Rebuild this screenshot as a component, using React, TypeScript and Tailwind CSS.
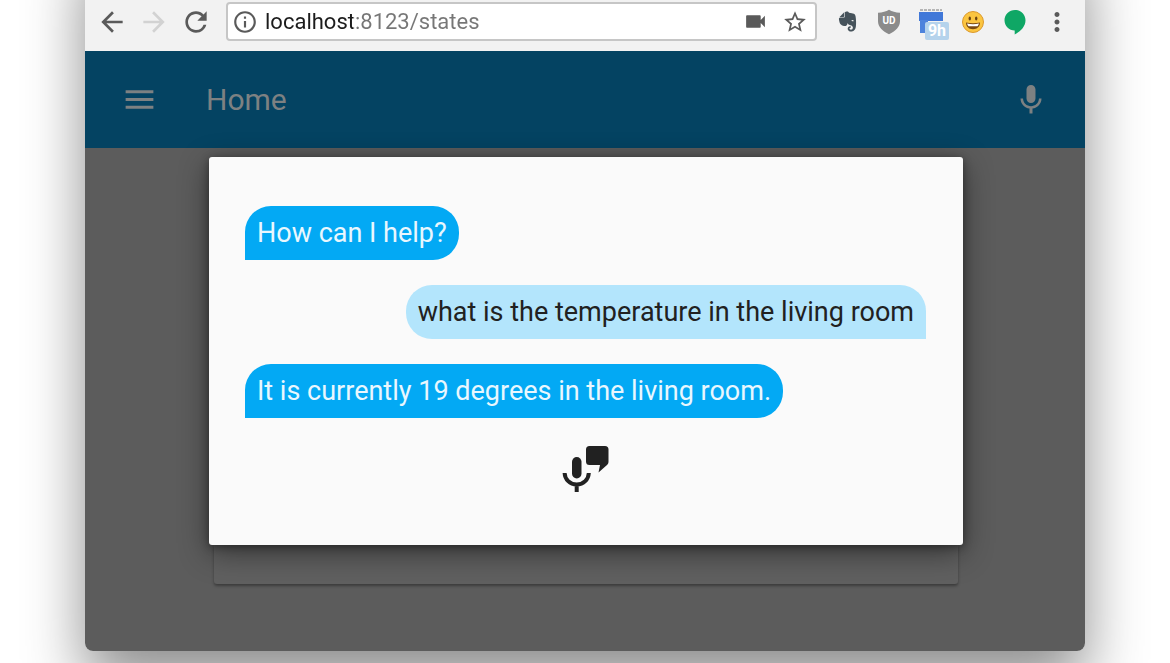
import React from 'react';
import { FaEvernote } from 'react-icons/fa';
import { MdArrowBack, MdArrowForward, MdInfoOutline, MdMenu, MdMic, MdMoreVert, MdRefresh, MdStarBorder, MdVideocam } from 'react-icons/md';

type Message = {
  id: number;
  from: 'assistant' | 'user';
  text: string;
};

const messages: Message[] = [
  { id: 1, from: 'assistant', text: 'How can I help?' },
  { id: 2, from: 'user', text: 'what is the temperature in the living room' },
  { id: 3, from: 'assistant', text: 'It is currently 19 degrees in the living room.' },
];

const iconButton = 'flex size-8 shrink-0 items-center justify-center';

const ShieldIcon = () => (
  <svg viewBox="0 0 24 26" className="h-[26px] w-6">
    <path d="M12 .8c3 1.800 6.500 2.800 11 3v8.400c0 5.800-4.600 9.800-11 13-6.400-3.200-11-7.200-11-13V3.800c4.500-.2 8-1.200 11-3z" fill="#8b8b8b" />
    <text x="12" y="15" textAnchor="middle" fontSize="10" fontWeight="700" fill="#fff">UD</text>
  </svg>
);

const CalendarIcon = () => (
  <svg viewBox="0 0 32 32" className="size-8">
    <path d="M5 4h22" stroke="#b5b5b5" strokeWidth="2" strokeDasharray="3 1" />
    <path d="M4 6h24v9H4z" fill="#4178d8" />
    <path d="M5 14h8v13H5z" fill="#4d83dc" />
  </svg>
);

const SmileyIcon = () => (
  <svg viewBox="0 0 24 24" className="size-6">
    <circle cx="12" cy="12" r="10.500" fill="#fbc540" stroke="#dc9a2e" />
    <ellipse cx="8.800" cy="8.500" rx="1.200" ry="1.900" fill="#6b4513" />
    <ellipse cx="15.200" cy="8.500" rx="1.200" ry="1.900" fill="#6b4513" />
    <path d="M5 12.500c4.500 1 9.500 1 14 0 0 4-2.800 6.700-7 6.700s-7-2.700-7-6.700z" fill="#7a4a12" />
    <path d="M6 13.600c4 .8 8 .8 12 0-.3 1-.8 1.900-1.500 2.600h-9c-.7-.7-1.200-1.600-1.500-2.600z" fill="#fff" />
  </svg>
);

const HangoutsIcon = () => (
  <svg viewBox="0 0 24 26" className="h-[26px] w-6" fill="#0fa765">
    <path d="M12 1C6.200 1 1.500 5.600 1.500 11.300c0 5.600 4.500 10.200 10.200 10.300v3.900c5.600-2.700 10.800-7.900 10.800-14.200C22.500 5.600 17.800 1 12 1z" />
  </svg>
);

const VoiceReplyIcon = () => (
  <svg viewBox="0 0 48 48" className="size-12" fill="#212121">
    <path d="M27.500 1h15.500A3.500 3.500 0 0 1 46.500 4.500v12c0 1.500-.5 2.500-1.500 3.500l-8.500 7.500 1.500-7.500H27.500a3.500 3.500 0 0 1-3.500-3.500v-12A3.500 3.500 0 0 1 27.500 1z" />
    <rect x="10" y="12" width="9.500" height="21.500" rx="4.750" />
    <path d="M2.600 28c.3 6.500 5.200 11.500 12.100 11.500S26.500 34.500 26.800 28M14.700 39v8" fill="none" stroke="#212121" strokeWidth="4" />
  </svg>
);

const BrowserToolbar: React.FC = () => (
  <div className="flex items-center gap-[14px] bg-[#f2f2f2] pt-[66px] pr-3 pb-[10px] pl-[11px] text-[#5a5a5a]">
    <nav className="flex gap-[10px]">
      <button aria-label="Back" className={iconButton}>
        <MdArrowBack size={32} />
      </button>
      <button aria-label="Forward" disabled className={`${iconButton} text-[#d2d2d2]`}>
        <MdArrowForward size={32} />
      </button>
      <button aria-label="Reload" className={iconButton}>
        <MdRefresh size={32} />
      </button>
    </nav>

    <div className="flex h-[39px] min-w-0 flex-1 items-center rounded-[4px] border-2 border-[#c6c6c6] bg-white px-1">
      <MdInfoOutline size={26} className="shrink-0" />
      <input
        type="text"
        aria-label="Address"
        defaultValue="localhost:8123/states"
        spellCheck={false}
        className="ml-[7px] min-w-0 flex-1 bg-[linear-gradient(to_right,#1c1c1c_88px,#767676_88px)] bg-clip-text text-[22px] leading-7 text-transparent outline-none"
      />
      <button aria-label="Camera" className={iconButton}>
        <MdVideocam size={25} />
      </button>
      <button aria-label="Bookmark this page" className="ml-2 flex size-8 shrink-0 items-center justify-center">
        <MdStarBorder size={26} />
      </button>
    </div>

    <div className="flex gap-[10px]">
      <button aria-label="Notes" className={iconButton}>
        <FaEvernote size={23} color="#46535b" />
      </button>
      <button aria-label="Blocker" className={iconButton}>
        <ShieldIcon />
      </button>
      <button aria-label="Calendar" className="relative size-8 shrink-0">
        <CalendarIcon />
        <span className="absolute -right-0.5 -bottom-0.5 flex h-[18px] w-6 items-center justify-center rounded-xs bg-[#b5d3ec] text-base leading-4 font-bold text-white">
          9h
        </span>
      </button>
      <button aria-label="Emoji" className={iconButton}>
        <SmileyIcon />
      </button>
      <button aria-label="Hangouts" className={iconButton}>
        <HangoutsIcon />
      </button>
      <button aria-label="More" className={iconButton}>
        <MdMoreVert size={30} />
      </button>
    </div>
  </div>
);

const AppHeader: React.FC = () => (
  <header className="flex h-[97px] items-center bg-[#044362] px-9 text-[#7d8182]">
    <button aria-label="Menu">
      <MdMenu size={37} />
    </button>
    <h1 className="ml-12 flex-1 text-[30px] leading-9">Home</h1>
    <button aria-label="Voice">
      <MdMic size={36} />
    </button>
  </header>
);

const VoiceDialog: React.FC = () => (
  <section
    role="dialog"
    aria-label="Conversation"
    className="relative flex flex-col gap-[25px] rounded-[3px] bg-[#fafafa] pt-[49px] pr-[37px] pb-[52px] pl-9 shadow-[0_8px_30px_rgba(0,0,0,0.45),0_2px_8px_rgba(0,0,0,0.4)]"
  >
    {messages.map((message) => (
      <p
        key={message.id}
        className={
          message.from === 'user'
            ? 'self-end rounded-[26px] rounded-br-none bg-[#b3e5fc] px-3 py-3 text-[27px] leading-[30px] text-[#212121]'
            : 'self-start rounded-[26px] rounded-bl-none bg-[#03a9f4] px-3 py-3 text-[27px] leading-[30px] text-[#e9f7fe]'
        }
      >
        {message.text}
      </p>
    ))}
    <button aria-label="Speak" className="self-center pt-0.5">
      <VoiceReplyIcon />
    </button>
  </section>
);

const App: React.FC = () => {
  return (
    <div className="min-h-screen overflow-hidden bg-white px-[85px] pb-3 font-[Roboto,sans-serif]">
      <div className="-mt-16 overflow-hidden rounded-b-lg shadow-[0_30px_60px_rgba(0,0,0,0.45)]">
        <BrowserToolbar />
        <AppHeader />
        <main className="bg-[#5c5c5c] pt-[9px] pr-[122px] pb-[67px] pl-[124px]">
          <VoiceDialog />
          <div className="mx-[5px] h-[39px] rounded-b-[3px] bg-[#606060] shadow-[0_2px_3px_rgba(0,0,0,0.35)]" />
        </main>
      </div>
    </div>
  );
};

export default App;
